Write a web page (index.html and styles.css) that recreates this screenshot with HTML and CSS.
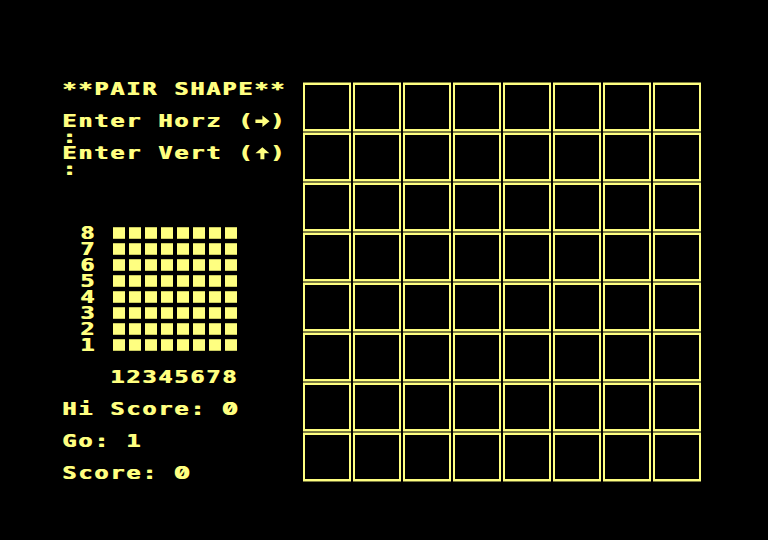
FILE: index.html
```html
<!DOCTYPE html>
<html lang="en">
<head>
  <meta charset="UTF-8" />
  <meta name="viewport" content="width=device-width, initial-scale=1.0" />
  <title>Pair Shape</title>
  <link rel="stylesheet" href="styles.css">
</head>
<body>
  <div class="screen">
    <div class="panel">
      <div class="line">**PAIR SHAPE**</div>
      <div class="line"> </div>
      <div class="line">Enter Horz (<svg class="arrow" viewBox="0 0 8 8" preserveAspectRatio="none"><polygon points="0.5,2.6 4,2.6 4,0.3 7.6,3.6 4,6.9 4,4.6 0.5,4.6"/></svg>)</div>
      <div class="line">:</div>
      <div class="line">Enter Vert (<svg class="arrow" viewBox="0 0 8 8" preserveAspectRatio="none"><polygon points="4,0.2 7.5,3.6 5,3.6 5,7 3,7 3,3.6 0.5,3.6"/></svg>)</div>
      <div class="line">:</div>
      <div class="line"> </div>
      <div class="line"> </div>
      <div class="line"> </div>

      <!-- small map of the board: row numbers + one block per square -->
      <div class="minimap" id="minimap"></div>

      <div class="line"> </div>
      <div class="line">   12345678</div>
      <div class="line"> </div>
      <div class="line">Hi Score: <span class="zero">0</span></div>
      <div class="line"> </div>
      <div class="line">Go: 1</div>
      <div class="line"> </div>
      <div class="line">Score: <span class="zero">0</span></div>
    </div>

    <div class="board" id="board"></div>
  </div>

  <script>
    // build the 8x8 playing board and the little map beside it
    const board = document.getElementById('board');
    for (let i = 0; i < 64; i++) {
      const cell = document.createElement('div');
      cell.className = 'cell';
      board.appendChild(cell);
    }

    const minimap = document.getElementById('minimap');
    for (let row = 8; row >= 1; row--) {
      const label = document.createElement('div');
      label.className = 'num';
      label.innerHTML = '<span class="glyph">' + row + '</span>';
      minimap.appendChild(label);
      for (let col = 0; col < 8; col++) {
        const block = document.createElement('div');
        block.className = 'block';
        minimap.appendChild(block);
      }
    }
  </script>
</body>
</html>
```

FILE: styles.css
```css
* {
  box-sizing: border-box;
  margin: 0;
  padding: 0;
}

body {
  background: #000;
  width: 768px;
  height: 540px;
  overflow: hidden;
  color: #ffff80;
  font-family: 'DejaVu Sans Mono', 'Liberation Mono', monospace;
  font-weight: bold;
  font-size: 18px;
}

.screen {
  display: flex;
  padding: 81px 0 0 62px;
}

.panel {
  width: 241px;
}

/* one text row of the 16px character grid */
.line,
.glyph {
  height: 16px;
  line-height: 16px;
  white-space: pre;
  letter-spacing: 1.47px;
  text-shadow: 0.7px 0 0 #ffff80;
  transform: scaleX(1.3);
  transform-origin: left;
}

/* slashed zero like the machine's own font */
.zero {
  font-family: Inter, 'DejaVu Sans', sans-serif;
  font-feature-settings: "zero" 1, "tnum" 1;
  font-weight: 800;
  font-size: 18px;
}

/* arrow keys drawn in one character cell */
.arrow {
  display: inline-block;
  width: 12.31px;
  height: 14px;
  margin-top: 2px;
  vertical-align: top;
  fill: #ffff80;
}

.minimap {
  display: grid;
  grid-template-columns: repeat(11, 16px);
  grid-auto-rows: 16px;
  padding-left: 2px;
}

.num {
  grid-column: 2;
}

.glyph {
  display: block;
}

.num + .block {
  grid-column: 4;
}

.block {
  width: 12px;
  height: 12px;
  margin: 2px 0 0 1px;
  background: #ffff80;
  box-shadow: inset 0 1px 0 #c8c860, inset 0 -1px 0 #c8c860;
}

.board {
  display: grid;
  grid-template-columns: repeat(8, 48px);
  grid-auto-rows: 48px;
  gap: 2px;
  margin-top: 2px;
}

.cell {
  border: 2px solid #ffff80;
  box-shadow: 0 1px 0 #7a7a40, 0 -1px 0 #7a7a40;
}
```
